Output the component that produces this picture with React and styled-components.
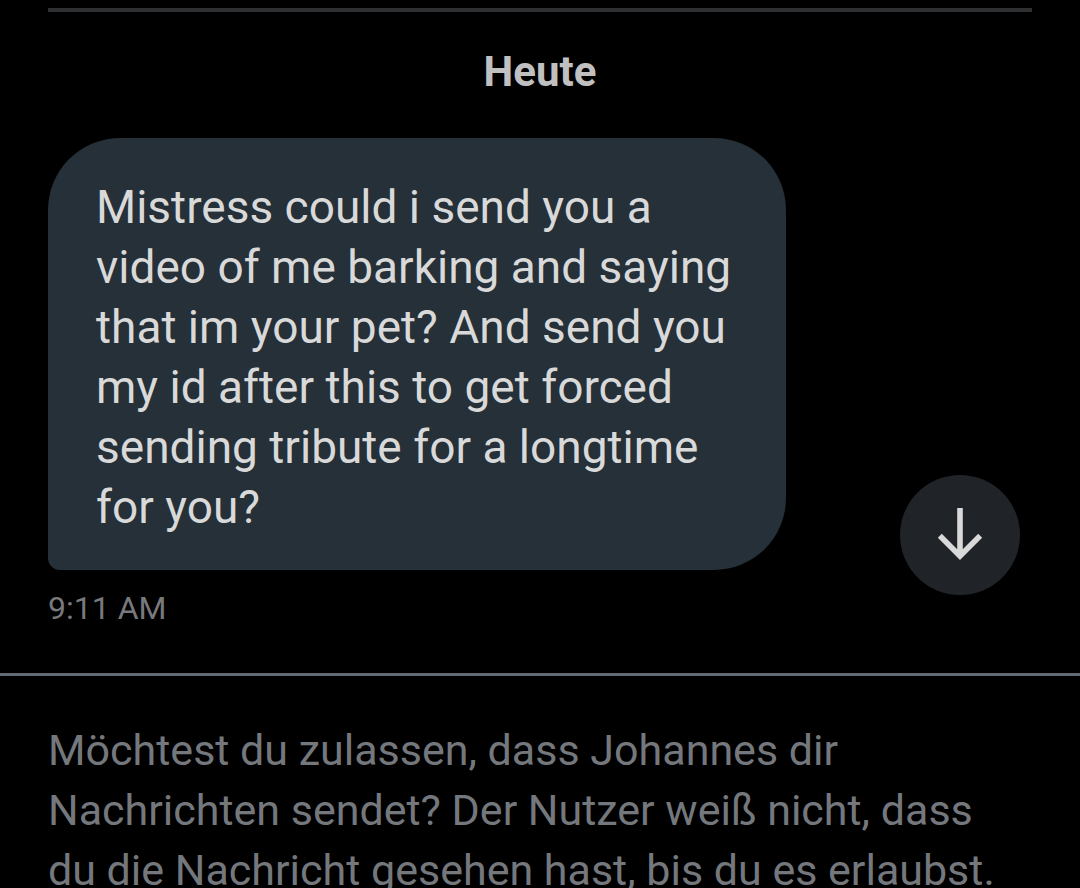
import React from 'react';
import styled, { createGlobalStyle } from 'styled-components';

const GlobalStyle = createGlobalStyle`
  * {
    box-sizing: border-box;
  }

  body {
    background: #000;
    color: #d9d9d9;
    font-family: Roboto, "Noto Sans", sans-serif;
    margin: 0;
  }
`;

const Screen = styled.div`
  height: 100vh;
  overflow: hidden;
`;

const Conversation = styled.main`
  padding: 8px 48px 41px;
`;

const Divider = styled.hr`
  background: #2f3031;
  border: 0;
  height: 4px;
  margin: 0;
`;

const DayHeading = styled.h2`
  color: #c0c0c0;
  font-size: 42px;
  line-height: 60px;
  margin: 0;
  padding: 30px 0 36px;
  text-align: center;
`;

const MessageRow = styled.div`
  align-items: flex-end;
  display: flex;
  justify-content: space-between;
`;

const Bubble = styled.p`
  background: #253038;
  border-radius: 72px 72px 72px 12px;
  font-size: 46px;
  line-height: 60px;
  margin: 0;
  max-width: 75%;
  padding: 39px 48px 33px;
`;

const ScrollButton = styled.button`
  align-items: center;
  background: #202327;
  border: 0;
  border-radius: 50%;
  color: #d9d9d9;
  display: flex;
  flex: none;
  height: 120px;
  justify-content: center;
  margin: 0 12px -25px 0;
  padding: 0;
  width: 120px;
`;

const Time = styled.time`
  color: #77797c;
  display: block;
  font-size: 32px;
  line-height: 48px;
  padding-top: 14px;
`;

const RequestPanel = styled.footer`
  border-top: 3px solid #626b74;
  color: #74787d;
  font-size: 43px;
  line-height: 60px;
  padding: 44px 60px 44px 48px;
`;

const RequestText = styled.p`
  margin: 0;
`;

const ArrowDown = () =>
  <svg width="60" height="60" viewBox="0 0 60 60" fill="none" stroke="currentColor" strokeWidth="5.6" aria-hidden="true">
    <path d="M30 3V50M9.8 30.8L30 51L50.2 30.8" />
  </svg>
;

const App = () =>
  <Screen>
    <GlobalStyle />
    <Conversation>
      <Divider />
      <DayHeading>Heute</DayHeading>
      <MessageRow>
        <Bubble>
          Mistress could i send you a video of me barking and saying that im your pet? And send you my id after this to get forced sending tribute for a longtime for you?
        </Bubble>
        <ScrollButton type="button" aria-label="Nach unten">
          <ArrowDown />
        </ScrollButton>
      </MessageRow>
      <Time>9:11 AM</Time>
    </Conversation>
    <RequestPanel>
      <RequestText>
        Möchtest du zulassen, dass Johannes dir Nachrichten sendet? Der Nutzer weiß nicht, dass du die Nachricht gesehen hast, bis du es erlaubst.
      </RequestText>
    </RequestPanel>
  </Screen>
;

export default App;
